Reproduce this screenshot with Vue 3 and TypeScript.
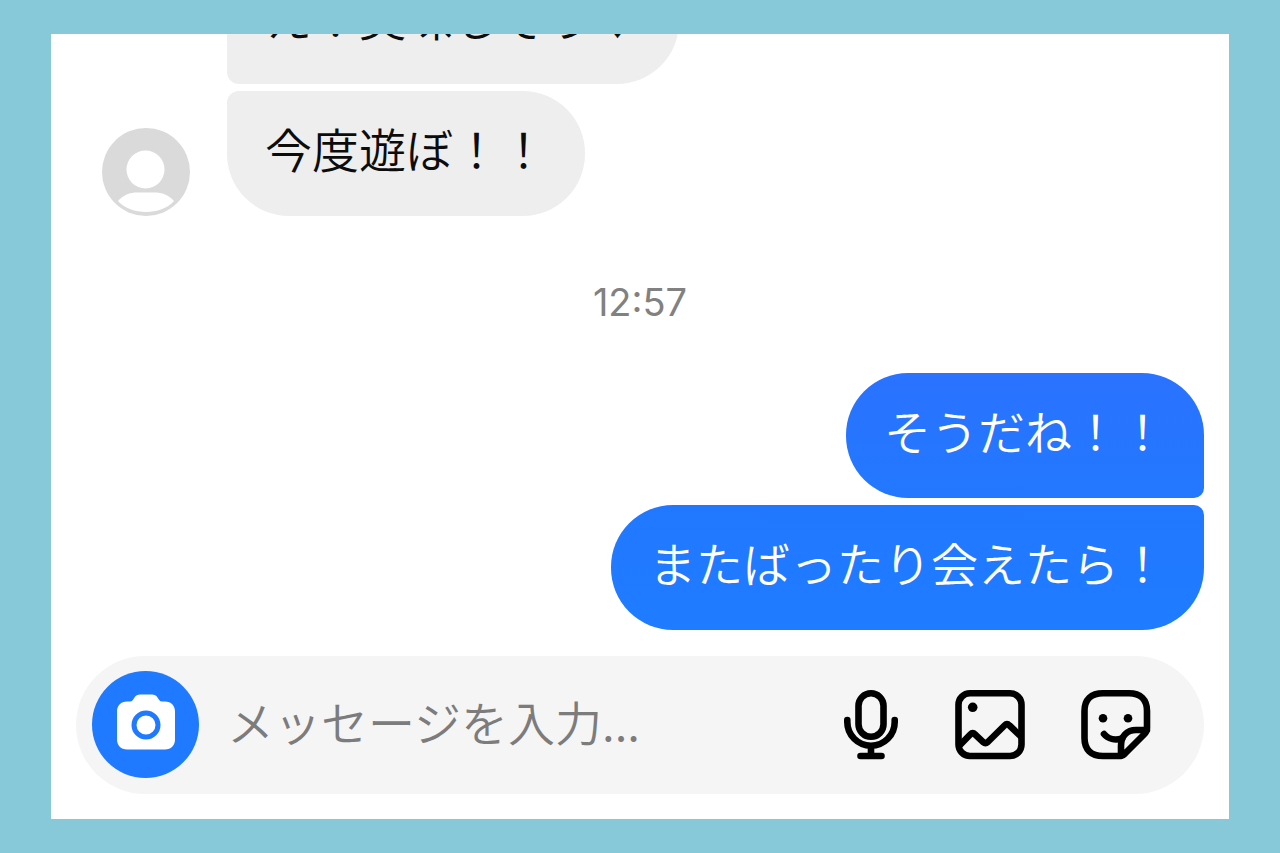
<script setup lang="ts">
import { ref } from 'vue'

interface Message {
  id: number
  text: string
}

const received: Message[] = [
  { id: 1, text: 'え！美味しそう♥' },
  { id: 2, text: '今度遊ぼ！！' },
]

const sent: Message[] = [
  { id: 3, text: 'そうだね！！' },
  { id: 4, text: 'またばったり会えたら！' },
]

const draft = ref('')
</script>

<template>
  <div class="frame">
    <main class="chat">
      <section class="thread">
        <div class="received">
          <svg class="avatar" viewBox="0 0 88 88" role="img" aria-label="プロフィール">
            <circle cx="44" cy="44" r="44" fill="#dadada" />
            <circle cx="43.500" cy="41.500" r="19" fill="#fff" />
            <path d="M16 73C21 67 28 64.500 35 64.500H52C60 64.500 67 67 72 73C65 80.500 55 84 44 84S23 80.500 16 73Z" fill="#fff" />
          </svg>
          <div class="stack">
            <p v-for="m in received" :key="m.id" class="bubble in">{{ m.text }}</p>
          </div>
        </div>
        <time class="stamp">12:57</time>
        <div class="stack mine">
          <p v-for="m in sent" :key="m.id" class="bubble out">{{ m.text }}</p>
        </div>
      </section>

      <form class="composer" @submit.prevent>
        <button type="button" class="camera" aria-label="カメラ">
          <svg width="64" height="64" viewBox="0 0 64 64">
            <path d="M13 8.500H16C18.500 8.500 19 6.500 20.500 4.500C22 2.300 23.500 1.500 26 1.500H38C40.500 1.500 42 2.300 43.500 4.500C45 6.500 45.500 8.500 48 8.500H51C57 8.500 61 12.500 61 18.500V46.500C61 52.500 57 56.500 51 56.500H13C7 56.500 3 52.500 3 46.500V18.500C3 12.500 7 8.500 13 8.500Z" fill="#fff" />
            <circle cx="32" cy="32" r="12" fill="none" stroke="#1f7aff" stroke-width="5" />
          </svg>
        </button>
        <input v-model="draft" class="field" type="text" placeholder="メッセージを入力..." aria-label="メッセージを入力" />
        <div class="tools">
          <button type="button" class="tool" aria-label="音声">
            <svg width="60" height="72" viewBox="-1 0 60 72">
              <rect x="17.500" y="4.300" width="25" height="43.500" rx="12.500" />
              <path d="M6.300 31V33A23.700 23.700 0 0 0 53.700 33V31M30 57V67M19.500 67H40.500" />
            </svg>
          </button>
          <button type="button" class="tool" aria-label="画像">
            <svg width="72" height="72" viewBox="0 0 72 72">
              <rect x="4.500" y="4.300" width="63" height="62.700" rx="11.500" />
              <path d="M6 56L16.500 45.300Q18.700 43 21 45.300L29.200 53.200Q31.500 55 33.800 53L50.500 36.500Q53 34 55.500 36.500L66.500 47" />
              <circle class="dot" cx="18.700" cy="18.300" r="4.800" />
            </svg>
          </button>
          <button type="button" class="tool" aria-label="スタンプ">
            <svg width="72" height="72" viewBox="0 0 72 72">
              <path d="M41 67H23C11 67 4.500 60.500 4.500 49V22C4.500 10.500 11 4.300 23 4.300H49C60.500 4.300 67 10.500 67 22V39C67 42 66 43.500 64 45.500L46 63.500C44 65.500 43.500 67 41 67V57C41 47 47 41 56 41H67" />
              <path d="M24 45C28 50 35 51.500 42 49.500" />
              <circle class="dot" cx="23" cy="29.300" r="4.300" />
              <circle class="dot" cx="48" cy="29.300" r="4.300" />
            </svg>
          </button>
        </div>
      </form>
    </main>
  </div>
</template>

<style>
body {
  margin: 0;
}
</style>

<style scoped>
.frame {
  box-sizing: border-box;
  height: 100vh;
  padding: 34px 51px;
  background: #87c8d9;
  font-family: "Noto Sans CJK JP", sans-serif;
}

.chat {
  box-sizing: border-box;
  display: flex;
  flex-direction: column;
  height: 100%;
  padding: 0 25px 25px;
  overflow: hidden;
  background: #fff;
}

.thread {
  display: flex;
  flex: 1;
  flex-direction: column;
  justify-content: flex-end;
  min-height: 0;
}

.received {
  display: flex;
  align-items: flex-end;
  gap: 37px;
  padding-left: 26px;
}

.avatar {
  flex: none;
  width: 88px;
  height: 88px;
}

.stack {
  display: flex;
  flex-direction: column;
  align-items: flex-start;
  gap: 7px;
}

.mine {
  align-items: flex-end;
}

.bubble {
  margin: 0;
  padding: 22px 38px 33px;
  font-size: 47px;
  font-weight: 350;
  line-height: 70px;
}

.in {
  border-radius: 12px 62px 62px 12px;
  background: #eee;
  color: #0c0c0c;
}

.in:last-child {
  border-bottom-left-radius: 62px;
}

.out {
  border-radius: 62px 10px 10px 62px;
  color: #fff;
}

.out:first-child {
  border-top-right-radius: 62px;
  background: linear-gradient(#2a72ff, #2378ff);
}

.out:last-child {
  border-bottom-right-radius: 62px;
  background: linear-gradient(#2178ff, #1f7cff);
}

.stamp {
  align-self: center;
  padding: 62px 0 47px;
  color: #818181;
  font-family: Inter, sans-serif;
  font-size: 38px;
  line-height: 48px;
}

.composer {
  display: flex;
  flex: none;
  align-items: center;
  margin-top: 26px;
  padding: 15px 52px 16px 16px;
  border-radius: 69px;
  background: #f5f5f5;
}

.camera {
  display: flex;
  flex: none;
  align-items: center;
  justify-content: center;
  width: 107px;
  height: 107px;
  padding: 0;
  border: 0;
  border-radius: 50%;
  background: #1f7aff;
}

.field {
  flex: 1;
  min-width: 0;
  height: 70px;
  margin: 0 24px 0 28px;
  padding: 0 0 8px;
  border: 0;
  outline: 0;
  background: transparent;
  color: #0c0c0c;
  font: inherit;
  font-size: 47px;
  font-weight: 350;
}

.field::placeholder {
  color: #7c7c7c;
  opacity: 1;
}

.tools {
  display: flex;
  gap: 54px;
}

.tool {
  display: flex;
  padding: 0;
  border: 0;
  background: none;
}

.tool svg {
  fill: none;
  stroke: #000;
  stroke-width: 6.6;
  stroke-linecap: round;
  stroke-linejoin: round;
}

.tool .dot {
  fill: #000;
  stroke: none;
}
</style>
